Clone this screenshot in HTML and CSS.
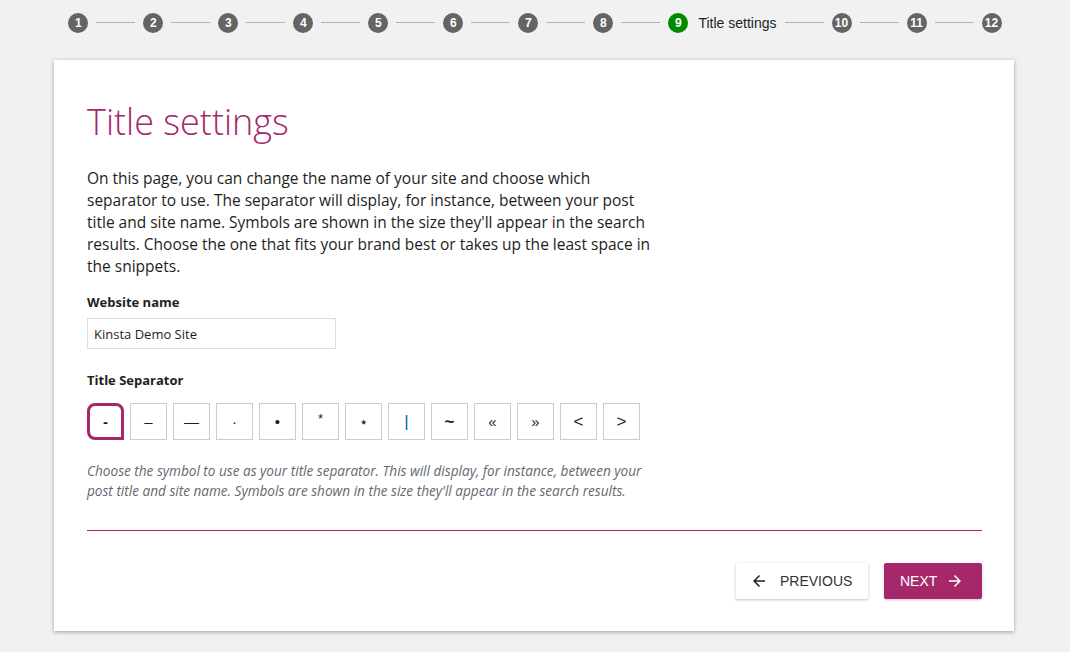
FILE: index.html
```html
<!DOCTYPE html>
<html lang="en">
<head>
<meta charset="utf-8">
<title>Title settings</title>
<link rel="stylesheet" href="styles.css">
</head>
<body>
<nav class="stepper">
  <span class="step">1</span><span class="line"></span>
  <span class="step">2</span><span class="line"></span>
  <span class="step">3</span><span class="line"></span>
  <span class="step">4</span><span class="line"></span>
  <span class="step">5</span><span class="line"></span>
  <span class="step">6</span><span class="line"></span>
  <span class="step">7</span><span class="line"></span>
  <span class="step">8</span><span class="line"></span>
  <span class="step step-active">9</span><span class="step-label">Title settings</span><span class="line"></span>
  <span class="step">10</span><span class="line"></span>
  <span class="step">11</span><span class="line"></span>
  <span class="step">12</span>
</nav>

<main class="card">
  <h1 class="title">Title settings</h1>
  <p class="intro">On this page, you can change the name of your site and choose which separator to use. The separator will display, for instance, between your post title and site name. Symbols are shown in the size they'll appear in the search results. Choose the one that fits your brand best or takes up the least space in the snippets.</p>

  <label class="field-label" for="site-name">Website name</label>
  <input class="text-input" id="site-name" type="text" value="Kinsta Demo Site">

  <div class="field-label sep-label">Title Separator</div>
  <div class="separators">
    <button class="sep sep-selected">-</button>
    <button class="sep">–</button>
    <button class="sep">—</button>
    <button class="sep">·</button>
    <button class="sep">•</button>
    <button class="sep sep-small">*</button>
    <button class="sep">⋆</button>
    <button class="sep sep-pipe">|</button>
    <button class="sep sep-tilde">~</button>
    <button class="sep">«</button>
    <button class="sep">»</button>
    <button class="sep sep-angle">&lt;</button>
    <button class="sep sep-angle">&gt;</button>
  </div>
  <p class="help">Choose the symbol to use as your title separator. This will display, for instance, between your post title and site name. Symbols are shown in the size they'll appear in the search results.</p>

  <div class="divider"></div>

  <div class="actions">
    <button class="btn btn-prev">
      <svg width="18" height="18" viewBox="0 0 24 24" aria-hidden="true"><path d="M20 11H7.83l5.59-5.59L12 4l-8 8 8 8 1.41-1.41L7.83 13H20v-2z" fill="#1e1e1e"/></svg>
      <span>PREVIOUS</span>
    </button>
    <button class="btn btn-next">
      <span>NEXT</span>
      <svg width="18" height="18" viewBox="0 0 24 24" aria-hidden="true"><path d="M12 4l-1.41 1.41L16.17 11H4v2h12.17l-5.58 5.59L12 20l8-8z" fill="#fff"/></svg>
    </button>
  </div>
</main>
</body>
</html>
```

FILE: styles.css
```css
html, body {
  margin: 0;
  padding: 0;
}
body {
  background: #f1f1f1;
  font-family: "Open Sans", "Noto Sans", sans-serif;
  color: #1e1e1e;
  width: 1070px;
  height: 652px;
  overflow: hidden;
}

.stepper {
  display: flex;
  justify-content: center;
  align-items: center;
  height: 44px;
  padding-top: 1px;
  box-sizing: border-box;
  font-family: "Liberation Sans", Arial, sans-serif;
}
.step {
  width: 20px;
  height: 20px;
  border-radius: 50%;
  background: #646464;
  color: #fff;
  font-size: 12px;
  font-weight: bold;
  display: flex;
  align-items: center;
  justify-content: center;
  flex: none;
}
.step-active {
  background: #008a00;
}
.step-label {
  font-size: 14px;
  color: #1e1e1e;
  margin-left: 10px;
}
.line {
  width: 39px;
  height: 1px;
  background: #b4b4b4;
  margin: 0 8px;
  flex: none;
}

.card {
  width: 960px;
  height: 571px;
  margin: 16px 0 0 54px;
  box-sizing: border-box;
  background: #fff;
  box-shadow: 0 1px 4px rgba(0, 0, 0, 0.35);
  padding: 0 32px 0 33px;
  display: flex;
  flex-direction: column;
  align-items: flex-start;
}

.title {
  font-weight: 300;
  font-size: 36px;
  color: #a4286a;
  margin: 38px 0 21px;
  line-height: 48px;
}

.intro {
  width: 570px;
  font-size: 15.5px;
  line-height: 22px;
  margin: 0 0 16px;
}

.field-label {
  font-weight: bold;
  font-size: 13px;
  line-height: 18px;
  margin-bottom: 7px;
}

.text-input {
  width: 249px;
  height: 31px;
  box-sizing: border-box;
  border: 1px solid #ddd;
  padding: 0 6px;
  font: 13px "Open Sans", "Noto Sans", sans-serif;
  color: #1e1e1e;
  margin: 0 0 22px;
}

.sep-label {
  margin-bottom: 14px;
}

.separators {
  display: flex;
  gap: 6px;
}
.sep {
  width: 37px;
  height: 37px;
  box-sizing: border-box;
  border: 1px solid #ccc;
  background: #fff;
  padding: 0;
  font: 15px "Liberation Sans", Arial, sans-serif;
  color: #1e1e1e;
  display: flex;
  align-items: center;
  justify-content: center;
}
.sep-small {
  font-size: 13px;
  padding-bottom: 6px;
}
.sep-pipe {
  color: #0066b3;
  font-size: 17px;
}
.sep-tilde {
  font-size: 17px;
  font-weight: bold;
}
.sep-angle {
  font-size: 17px;
}
.sep-selected {
  border: 3px solid #a4286a;
  border-radius: 8px 8px 0 8px;
  font-weight: bold;
}

.help {
  width: 566px;
  font-size: 13.6px;
  font-style: italic;
  line-height: 20px;
  color: #646970;
  margin: 21px 0 0;
}

.divider {
  width: 100%;
  height: 1px;
  background: #a4286a;
  margin: 29px 0 0;
}

.actions {
  align-self: stretch;
  display: flex;
  justify-content: flex-end;
  gap: 16px;
  margin-top: 32px;
}
.btn {
  height: 36px;
  border: 0;
  border-radius: 2px;
  display: flex;
  align-items: center;
  font: 14px "Liberation Sans", Arial, sans-serif;
  cursor: pointer;
}
.btn-prev {
  width: 132px;
  background: #fff;
  color: #333;
  box-shadow: 0 1px 3px rgba(0, 0, 0, 0.25);
  padding: 0 0 0 14px;
  gap: 12px;
}
.btn-next {
  width: 98px;
  background: #a4286a;
  color: #fff;
  box-shadow: 0 1px 3px rgba(0, 0, 0, 0.2);
  padding: 0 0 0 16px;
  gap: 9px;
}
```
